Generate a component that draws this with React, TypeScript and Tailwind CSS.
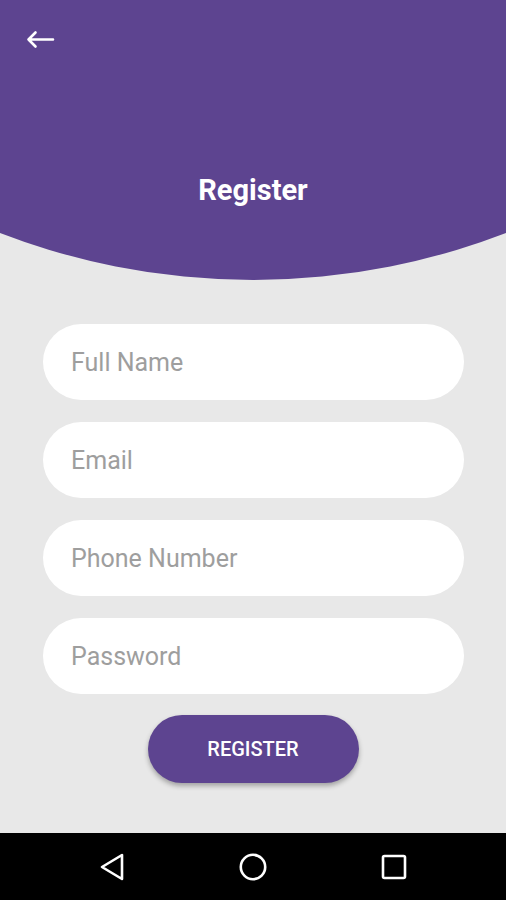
import React from "react";

const fields = ["Full Name", "Email", "Phone Number", "Password"];

export default function App() {
  return (
    <div
      className="w-[506px] h-[900px] flex flex-col bg-[#e8e8e8] overflow-hidden"
      style={{ fontFamily: "Roboto, 'Noto Sans', sans-serif" }}
    >
      <div className="h-[280px] shrink-0 bg-[#5d4490] [clip-path:circle(704px_at_50%_-424px)] flex flex-col">
        <div className="pt-[27px] pl-[24px]">
          <svg width="32" height="24" viewBox="0 0 32 24" fill="none">
            <path
              d="M4.5 12.5 H29 M4.5 12.5 L11.5 5.5 M4.5 12.5 L11.5 19.5"
              stroke="white"
              strokeWidth="2.6"
              strokeLinecap="round"
              strokeLinejoin="round"
            />
          </svg>
        </div>
        <h1 className="mt-[122px] text-center text-white font-bold text-[29px] leading-[34px]">
          Register
        </h1>
      </div>

      <div className="flex-1 flex flex-col pt-[44px] pl-[43px] pr-[42px]">
        <div className="flex flex-col gap-[22px]">
          {fields.map((f) => (
            <div
              key={f}
              className="h-[76px] rounded-full bg-white flex items-center pl-[28px] pt-[2px] text-[25px] text-[#9e9e9e]"
            >
              {f}
            </div>
          ))}
        </div>
        <div className="flex justify-center mt-[21px] pr-[1px]">
          <button className="w-[211px] h-[68px] rounded-full bg-[#5d4490] text-white font-medium text-[20px] shadow-[0_3px_5px_rgba(0,0,0,0.3)]">
            REGISTER
          </button>
        </div>
      </div>

      <div className="h-[67px] shrink-0 bg-black flex items-center justify-center gap-[112px]">
        <svg width="28" height="30" viewBox="0 0 28 30" fill="none">
          <path d="M24 3 L24 27 L4 15 Z" stroke="white" strokeWidth="2.6" strokeLinejoin="round" />
        </svg>
        <svg width="30" height="30" viewBox="0 0 30 30" fill="none">
          <circle cx="15" cy="15" r="12.2" stroke="white" strokeWidth="2.6" />
        </svg>
        <svg width="28" height="28" viewBox="0 0 28 28" fill="none">
          <rect x="3" y="3" width="22" height="22" rx="1.5" stroke="white" strokeWidth="2.6" />
        </svg>
      </div>
    </div>
  );
}
